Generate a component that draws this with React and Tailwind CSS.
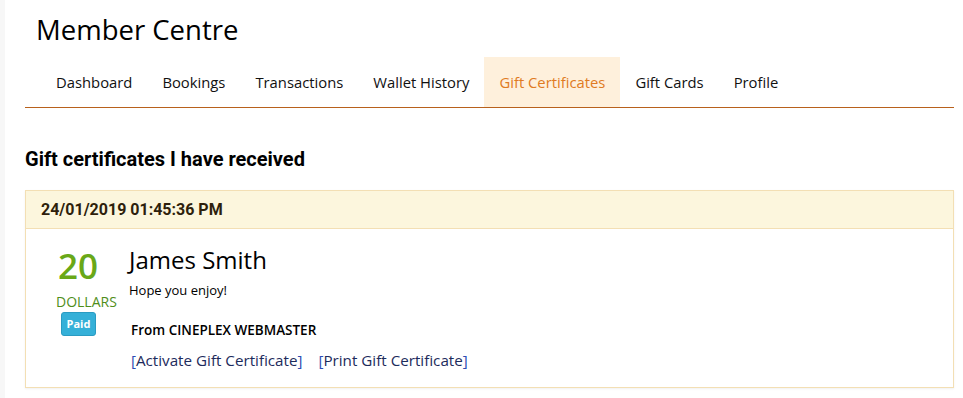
import React from 'react';

const tabs = ['Dashboard', 'Bookings', 'Transactions', 'Wallet History', 'Gift Certificates', 'Gift Cards', 'Profile'];

export default function App() {
  const active = 'Gift Certificates';

  return (
    <div className="flex min-h-[398px] bg-white">
      <div className="w-[5px] shrink-0 bg-[#f7f7f7]" />
      <div className="flex-1 pl-[20px] pr-[9px]">
        <h1 className="pl-[11px] pt-[12px] text-[27.5px] leading-[36px] text-black font-['Open_Sans',sans-serif]">
          Member Centre
        </h1>

        {/* tabs */}
        <ul className="mt-[9px] flex border-b border-[#b8611c] pl-[16px] font-['Open_Sans',sans-serif]">
          {tabs.map((t) => (
            <li
              key={t}
              className={
                'px-[15px] h-[50px] flex items-center text-[14.8px] ' +
                (t === active ? 'bg-[#fef0dc] text-[#e07b22]' : 'text-[#111]')
              }
            >
              {t}
            </li>
          ))}
        </ul>

        <h2 className="mt-[38px] text-[20px] font-bold leading-[26px] text-black font-['Roboto',sans-serif]">
          Gift certificates I have received
        </h2>

        {/* certificate card */}
        <div className="mt-[18px] border border-[#f3dfb4] shadow-[0_1px_2px_rgba(0,0,0,0.06)]">
          <div className="h-[38px] flex items-center px-[15px] bg-[#fcf6dd] border-b border-[#f3dfb4] text-[16px] font-bold text-[#2e1f0c] font-['Roboto',sans-serif]">
            24/01/2019 01:45:36 PM
          </div>
          <div className="flex pl-[30px] pt-[15px] pb-[17px]">
            <div className="w-[73px] flex flex-col items-start shrink-0">
              <div className="ml-[2px] text-[35px] leading-[44px] font-semibold text-[#69a818] font-['Open_Sans',sans-serif]">20</div>
              <div className="mt-[6px] text-[14px] leading-[16px] text-[#4f8e1a] font-['Open_Sans',sans-serif]">DOLLARS</div>
              <div className="mt-[2px] ml-[5px] w-[35px] h-[24px] flex items-center justify-center rounded-[3px] bg-[#35b0d8] border border-[#2a9bc2] text-white text-[11px] font-bold font-['Open_Sans',sans-serif]">
                Paid
              </div>
            </div>
            <div className="flex flex-col">
              <div className="text-[24px] leading-[32px] text-black font-['Open_Sans',sans-serif]">James Smith</div>
              <div className="mt-[6px] text-[13px] leading-[16px] text-black font-['Open_Sans',sans-serif]">Hope you enjoy!</div>
              <div className="mt-[23px] pl-[2px] text-[13.5px] leading-[18px] font-semibold text-black font-['Open_Sans',sans-serif]">
                From CINEPLEX WEBMASTER
              </div>
              <div className="mt-[11px] pl-[2px] flex gap-[16px] text-[15.2px] leading-[20px] text-[#1d2b5c] font-['Open_Sans',sans-serif]">
                <span>
                  <span className="text-[#2d4db4]">[</span>Activate Gift Certificate<span className="text-[#2d4db4]">]</span>
                </span>
                <span>
                  <span className="text-[#2d4db4]">[</span>Print Gift Certificate<span className="text-[#2d4db4]">]</span>
                </span>
              </div>
            </div>
          </div>
        </div>
      </div>
    </div>
  );
}
